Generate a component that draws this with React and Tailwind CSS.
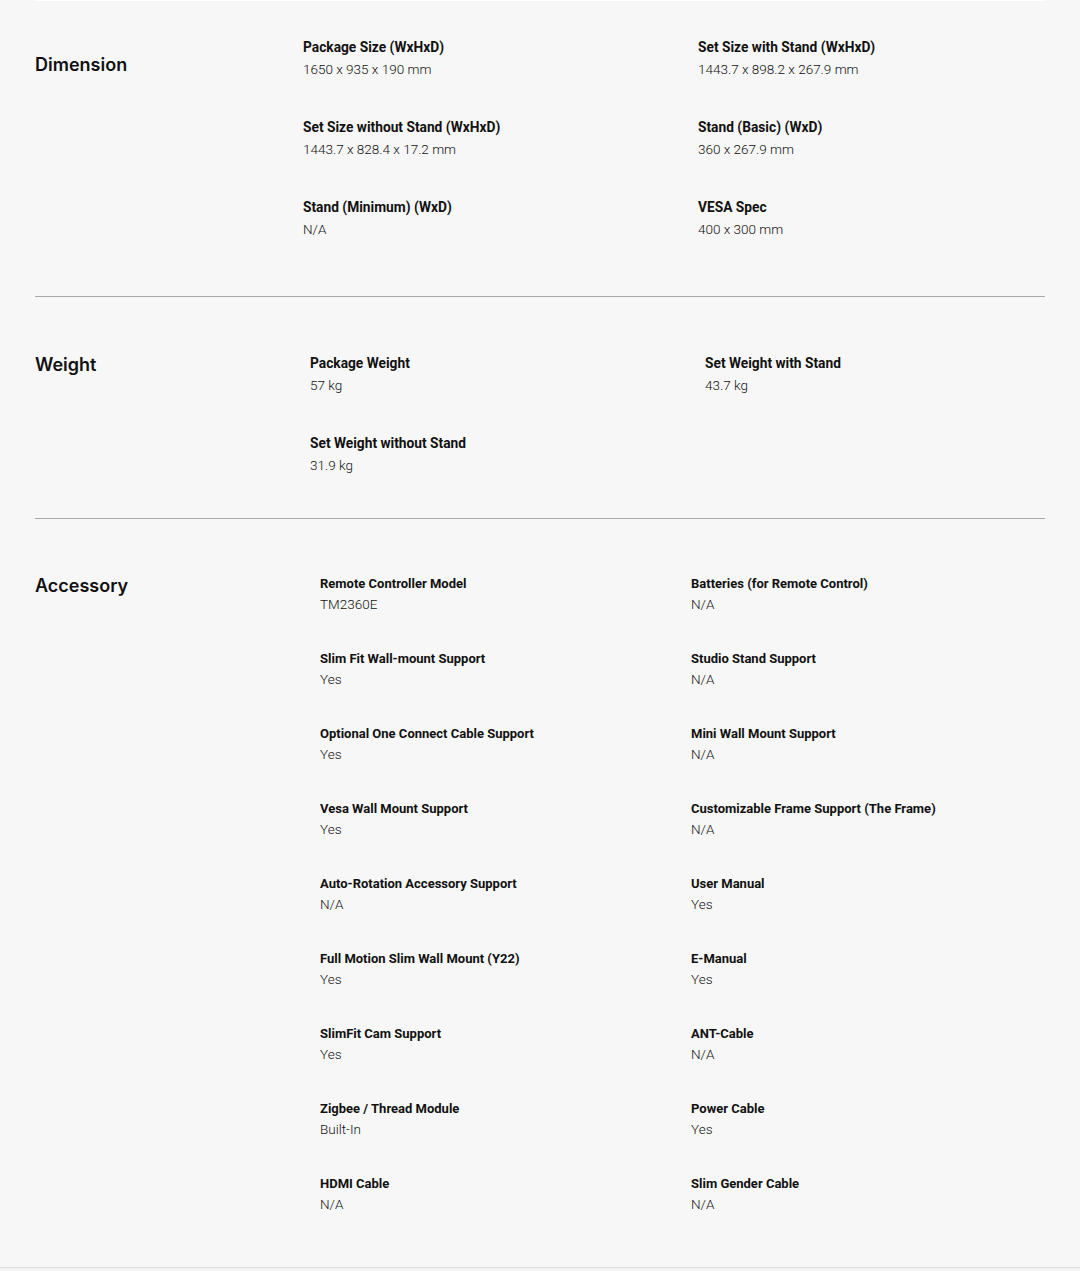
import React from "react";

const dimension = [
  ["Package Size (WxHxD)", "1650 x 935 x 190 mm"],
  ["Set Size with Stand (WxHxD)", "1443.7 x 898.2 x 267.9 mm"],
  ["Set Size without Stand (WxHxD)", "1443.7 x 828.4 x 17.2 mm"],
  ["Stand (Basic) (WxD)", "360 x 267.9 mm"],
  ["Stand (Minimum) (WxD)", "N/A"],
  ["VESA Spec", "400 x 300 mm"],
];

const weight = [
  ["Package Weight", "57 kg"],
  ["Set Weight with Stand", "43.7 kg"],
  ["Set Weight without Stand", "31.9 kg"],
];

const accessory = [
  ["Remote Controller Model", "TM2360E"],
  ["Batteries (for Remote Control)", "N/A"],
  ["Slim Fit Wall-mount Support", "Yes"],
  ["Studio Stand Support", "N/A"],
  ["Optional One Connect Cable Support", "Yes"],
  ["Mini Wall Mount Support", "N/A"],
  ["Vesa Wall Mount Support", "Yes"],
  ["Customizable Frame Support (The Frame)", "N/A"],
  ["Auto-Rotation Accessory Support", "N/A"],
  ["User Manual", "Yes"],
  ["Full Motion Slim Wall Mount (Y22)", "Yes"],
  ["E-Manual", "Yes"],
  ["SlimFit Cam Support", "Yes"],
  ["ANT-Cable", "N/A"],
  ["Zigbee / Thread Module", "Built-In"],
  ["Power Cable", "Yes"],
  ["HDMI Cable", "N/A"],
  ["Slim Gender Cable", "N/A"],
];

const Spec = ({ label, value, small }) =>
  small ? (
    <div>
      <p className="text-[13px] font-bold leading-[20px] text-[#111]">{label}</p>
      <p className="text-[13.5px] font-light leading-[20px] text-[#111]">{value}</p>
    </div>
  ) : (
    <div>
      <p className="text-[13.75px] font-bold leading-[20px] text-[#111]">{label}</p>
      <p className="mt-[2px] text-[13.5px] font-light leading-[20px] text-[#111]">
        {value}
      </p>
    </div>
  );

const App = () => {
  return (
    <div
      className="min-h-[1271px] bg-[#f7f7f7]"
      style={{ fontFamily: "Roboto, 'Liberation Sans', sans-serif" }}
    >
      <div className="mx-[35px] border-t border-white">
        {/* Dimension */}
        <section className="flex pt-[36px] pb-[57px] border-b border-[#a8a8a8]">
          <h3
            className="w-[268px] shrink-0 pt-[17px] text-[18px] font-semibold leading-[22px] text-[#111]"
            style={{ fontFamily: "Inter, sans-serif" }}
          >
            Dimension
          </h3>
          <div className="grid grid-cols-[395px_1fr] gap-y-[38px]">
            {dimension.map(([l, v]) => (
              <Spec key={l} label={l} value={v} />
            ))}
          </div>
        </section>

        {/* Weight */}
        <section className="flex pt-[56px] pb-[43px] border-b border-[#a8a8a8]">
          <h3
            className="w-[275px] shrink-0 pt-px text-[18px] font-semibold leading-[22px] text-[#111]"
            style={{ fontFamily: "Inter, sans-serif" }}
          >
            Weight
          </h3>
          <div className="grid grid-cols-[395px_1fr] gap-y-[38px]">
            {weight.map(([l, v]) => (
              <Spec key={l} label={l} value={v} />
            ))}
          </div>
        </section>

        {/* Accessory */}
        <section className="flex pt-[55px] pb-[53px]">
          <h3
            className="w-[285px] shrink-0 pt-px text-[18px] font-semibold leading-[22px] text-[#111]"
            style={{ fontFamily: "Inter, sans-serif" }}
          >
            Accessory
          </h3>
          <div className="grid grid-cols-[371px_1fr] gap-y-[35px]">
            {accessory.map(([l, v]) => (
              <Spec key={l} label={l} value={v} small />
            ))}
          </div>
        </section>
      </div>
      <div className="border-t border-[#dedede] bg-[#f3f3f3] h-[4px]" />
    </div>
  );
};

export default App;
